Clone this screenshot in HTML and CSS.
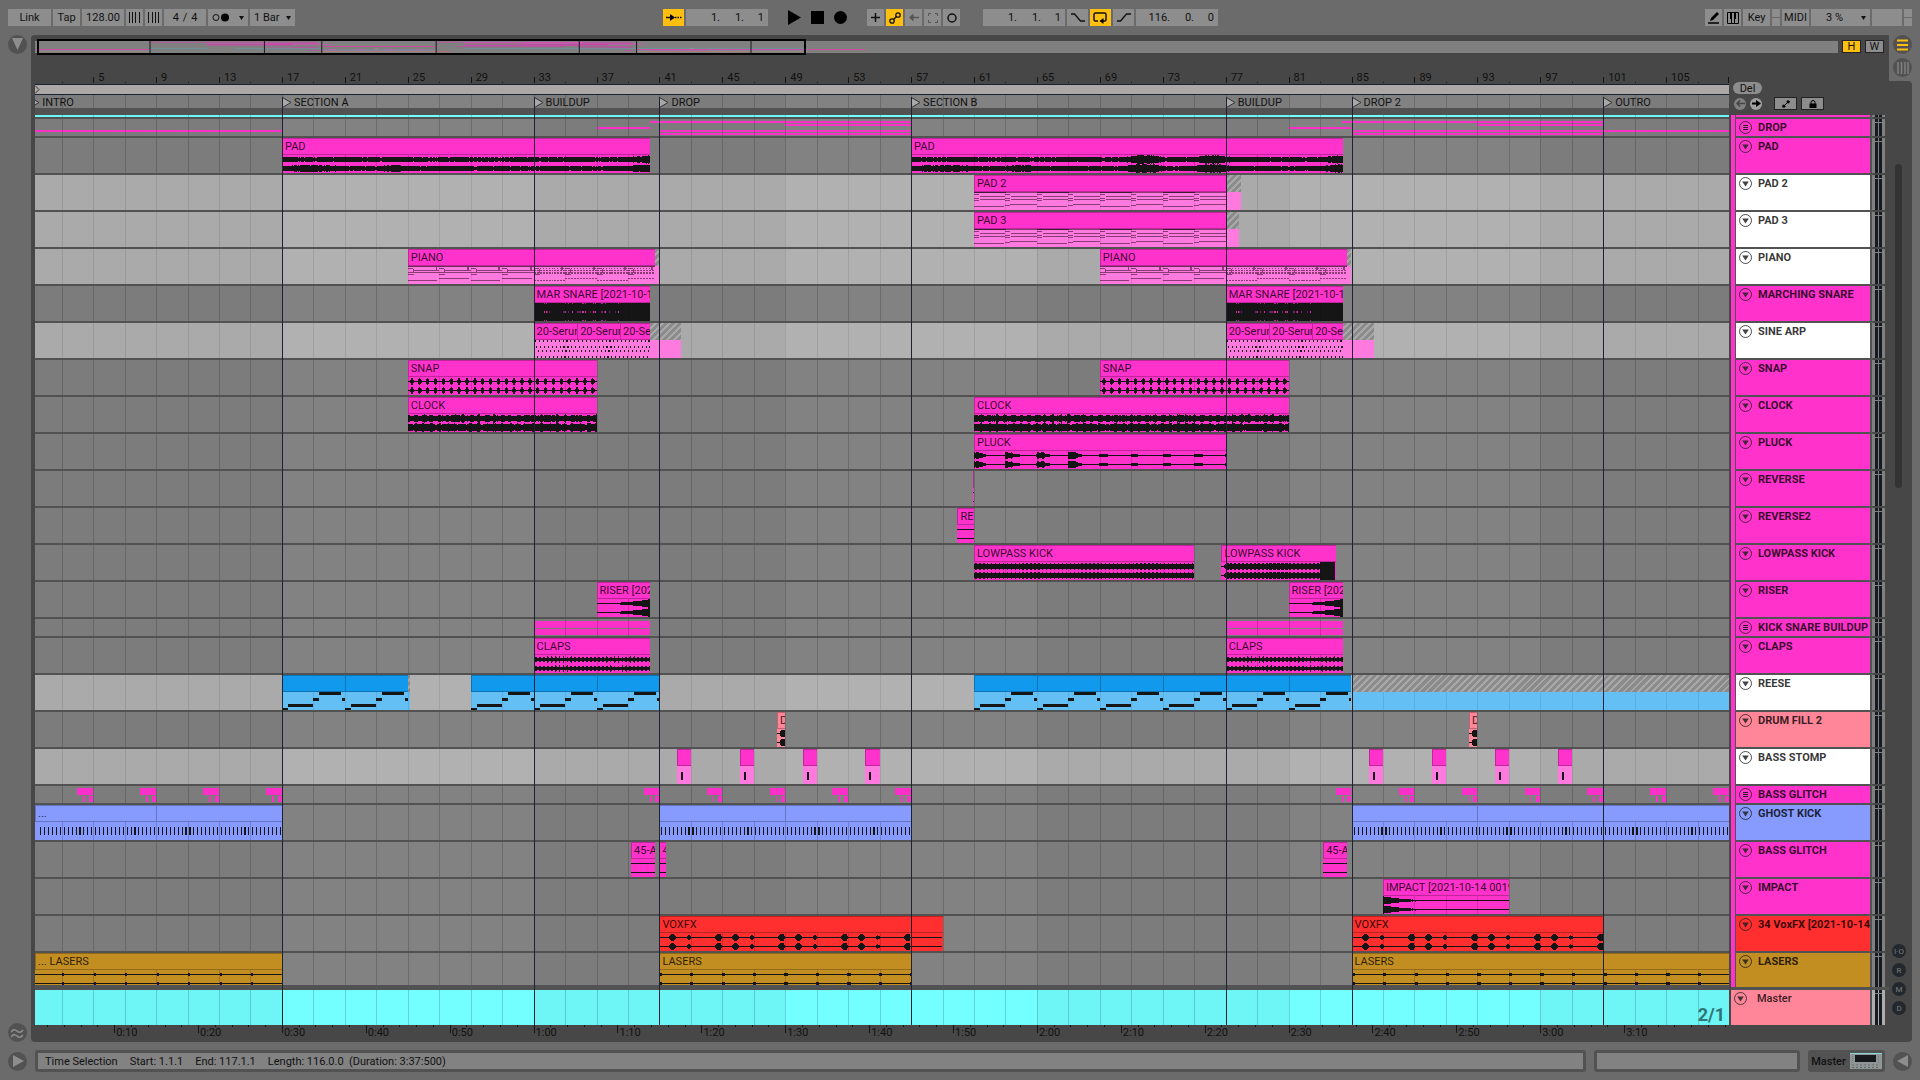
FILE: index.html
```html
<!DOCTYPE html>
<html lang="en">
<head>
    <meta charset="UTF-8">
    <meta name="viewport" content="width=device-width, initial-scale=1.0">
    <title>Arrangement</title>
    <link rel="stylesheet" href="styles.css">
</head>
<body>
    <header class="toolbar">
        <div class="tools">
            <button class="btn w-link">Link</button>
            <button class="btn w-key">Tap</button>
            <input class="field w-tempo" type="text" value="128.00" aria-label="Tempo">
            <button class="btn w-icon" aria-label="Nudge down">
                <svg width="13" height="11"><path d="M1.5 0v11M4.5 0v11M7.5 0v11M11.5 0v11" stroke="#111"/></svg>
            </button>
            <button class="btn w-icon" aria-label="Nudge up">
                <svg width="13" height="11"><path d="M1.5 0v11M5.5 0v11M8.5 0v11M11.5 0v11" stroke="#111"/></svg>
            </button>
            <div class="field signature w-tempo">
                <input type="text" value="4" aria-label="Beats"><span>/</span><input type="text" value="4" aria-label="Beat unit">
            </div>
            <button class="btn w-metro" aria-label="Metronome">
                <svg width="18" height="9"><circle cx="4" cy="4.5" r="3" fill="none" stroke="#111"/><circle cx="13" cy="4.5" r="4" fill="#000"/></svg>
                <svg width="5" height="4"><path d="M0 0h5l-2.5 4z" fill="#111"/></svg>
            </button>
            <span class="select w-bar">
                <select aria-label="Quantization"><option>1 Bar</option><option>None</option></select>
            </span>
        </div>

        <div class="tools">
            <button class="btn on w-wide" aria-label="Follow">
                <svg width="16" height="9"><path d="M0 4.5h5M9 4.5h1.500M11.500 4.500h1.500M14 4.500h1.500" stroke="#111" stroke-width="1.500"/><path d="M4 1l5 3.500-5 3.500z"/></svg>
            </button>
            <div class="field position">
                <input type="text" value="1." aria-label="Bar"><input type="text" value="1." aria-label="Beat"><input type="text" value="1" aria-label="Sixteenth">
            </div>
            <div class="transport">
                <button aria-label="Play"><svg width="13" height="15"><path d="M0 0l13 7.500-13 7.500z"/></svg></button>
                <button aria-label="Stop"><svg width="13" height="13"><path d="M0 0h13v13H0z"/></svg></button>
                <button aria-label="Record"><svg width="13" height="13"><circle cx="6.500" cy="6.500" r="6.500"/></svg></button>
            </div>
            <button class="btn w-icon" aria-label="Overdub"><svg width="9" height="9"><path d="M4.500 0v9M0 4.500h9" stroke="#111" stroke-width="1.500"/></svg></button>
            <button class="btn on w-icon" aria-label="Automation arm">
                <svg width="12" height="12" fill="none" stroke="#111" stroke-width="1.300"><circle cx="3" cy="9" r="2.200"/><circle cx="9" cy="3" r="2.200"/><path d="M4.500 7.500L7.500 4.500" stroke-width="1.500"/></svg>
            </button>
            <button class="btn w-icon" aria-label="Re-enable automation"><svg width="10" height="9"><path d="M3 4.500h7" stroke="#555" stroke-width="1.500"/><path d="M0 4.500l4.500-4v8z" fill="#555"/></svg></button>
            <button class="btn w-icon" aria-label="Capture"><svg width="10" height="10" fill="none" stroke="#555"><path d="M.5 3V.5H3M7 .5h2.500V3M9.500 7v2.500H7M3 9.500H.5V7"/></svg></button>
            <button class="btn w-icon" aria-label="Session record"><svg width="10" height="10"><circle cx="5" cy="5" r="4" fill="none" stroke="#111" stroke-width="1.500"/></svg></button>
            <div class="field position loop-start">
                <input type="text" value="1." aria-label="Loop bar"><input type="text" value="1." aria-label="Loop beat"><input type="text" value="1" aria-label="Loop sixteenth">
            </div>
            <button class="btn w-wide" aria-label="Punch in"><svg width="14" height="9"><path d="M0 1h3.500l6 7H14" fill="none" stroke="#111" stroke-width="1.300"/></svg></button>
            <button class="btn on w-wide" aria-label="Loop"><svg width="15" height="12"><path d="M5 9H2.500Q1 9 1 7.500v-5Q1 1 2.500 1h9Q13 1 13 2.500v5Q13 9 11.500 9H9" fill="none" stroke="#111" stroke-width="1.500"/><path d="M6.500 9l4-3v6z"/></svg></button>
            <button class="btn w-wide" aria-label="Punch out"><svg width="14" height="9"><path d="M0 8h3.500l6-7H14" fill="none" stroke="#111" stroke-width="1.300"/></svg></button>
            <div class="field position">
                <input type="text" value="116." aria-label="Length bars"><input type="text" value="0." aria-label="Length beats"><input type="text" value="0" aria-label="Length sixteenths">
            </div>
        </div>

        <div class="tools right">
            <button class="btn w-icon" aria-label="Draw mode"><svg width="12" height="12"><path d="M2 9l1-3 6-6 2 2-6 6z"/><path d="M0 11h11" stroke="#000" stroke-width="1.500"/></svg></button>
            <button class="btn w-icon" aria-label="Computer keyboard"><svg width="12" height="12"><path d="M.5.5h11v11H.5zM4.500 6v6M7.500 6v6" fill="none" stroke="#000"/><path d="M3 1h2v6H3zM7 1h2v6H7z"/></svg></button>
            <button class="btn w-key">Key</button>
            <span class="leds"><i></i><i></i></span>
            <button class="btn w-key">MIDI</button>
            <span class="select w-cpu">
                <select aria-label="CPU load"><option>3 %</option></select>
            </span>
            <span class="field w-disk"></span>
            <span class="leds"><i></i><i></i></span>
        </div>
    </header>

    <main class="workspace">
        <div class="gutter left">
            <button class="round" aria-label="Show browser"><svg width="11" height="13"><path d="M0 0h11l-5.500 12z" fill="#8d8d8d"/></svg></button>
            <button class="round" aria-label="Groove pool"><svg width="13" height="12" fill="none" stroke="#8d8d8d" stroke-width="1.500"><path d="M0 5q3-4 6-1t6-1M0 10q3-4 6-1t6-1"/></svg></button>
        </div>

        <section class="panel">
            <div class="overview-row">
                <div class="overview" id="overview"></div>
                <button class="btn boxed on">H</button>
                <button class="btn boxed">W</button>
            </div>
            <div class="arrangement">
                <div class="timeline">
                    <div class="ruler" id="ruler"></div>
                    <div class="sheet">
                        <div class="loop"><svg class="marker" width="5" height="9"><path d="M0 .5l4 4-4 4" fill="none" stroke="#333"/></svg></div>
                        <div class="locators" id="locators"></div>
                        <div class="lanes" id="lanes"></div>
                        <div class="section-lines" id="sectionLines"></div>
                    </div>
                    <div class="time-ruler" id="timeRuler"></div>
                </div>
                <div class="tracks">
                    <div class="track-tools">
                        <button class="pill">Del</button>
                        <div class="tool-line">
                            <button class="dot off" aria-label="Previous locator"><svg width="9" height="7"><path d="M1 3.500h8M4 .5l-3 3 3 3" fill="none" stroke="#444" stroke-width="1.500"/></svg></button>
                            <button class="dot" aria-label="Next locator"><svg width="9" height="7"><path d="M0 3.500h6" stroke="#000" stroke-width="2"/><path d="M4 0l5 3.500-5 3.500z"/></svg></button>
                            <button class="btn boxed tool" aria-label="Automation mode"><svg width="8" height="8"><path d="M1.500 6.500l5-5" stroke="#000"/><circle cx="1.800" cy="6.200" r="1.600"/><circle cx="6.200" cy="1.800" r="1.600"/></svg></button>
                            <button class="btn boxed tool" aria-label="Lock envelopes"><svg width="8" height="8"><path d="M.5 3.500h7V8h-7z"/><path d="M2 4V2.500a2 2 0 014 0V4" fill="none" stroke="#000"/></svg></button>
                        </div>
                    </div>
                    <div class="headers" id="headers"></div>
                </div>
            </div>
        </section>

        <div class="gutter side">
            <div class="views">
                <button class="round" aria-label="Arrangement view"><svg width="11" height="12"><path d="M0 1.500h11M0 6h11M0 10.500h11" stroke="#ffbf0f" stroke-width="2"/></svg></button>
                <button class="round" aria-label="Session view"><svg width="12" height="12"><path d="M1 0v12M4.500 0v12M8 0v12M11 0v12" stroke="#808080" stroke-width="1.500"/></svg></button>
            </div>
            <div class="scroll">
                <div class="thumb"></div>
                <div class="shows">
                    <button>I·O</button>
                    <button>R</button>
                    <button>M</button>
                    <button>D</button>
                </div>
            </div>
        </div>
    </main>

    <footer class="status">
        <button class="round" aria-label="Show info"><svg width="12" height="12"><path d="M1 0l11 6-11 6z" fill="#8d8d8d"/></svg></button>
        <div class="info">
            <span>Time Selection</span>
            <span>Start: 1.1.1</span>
            <span>End: 117.1.1</span>
            <span>Length: 116.0.0&nbsp; (Duration: 3:37:500)</span>
        </div>
        <div class="info message"></div>
        <button class="device">Master
            <svg width="32" height="16"><path d="M0 0h32v16H0z" fill="#8f9696"/><path d="M5 2h21v7H5z" fill="#15191c"/><path d="M0 .5h32" stroke="#8fd6d6"/><path d="M2 12h28M2 14.500h28" stroke="#666" stroke-dasharray="2 2"/><path d="M28.500 3v7M2.500 3v7" stroke="#777" stroke-dasharray="1 1"/></svg>
        </button>
        <button class="round" aria-label="Show clip view"><svg width="12" height="12"><path d="M11 0L0 6l11 6z" fill="#8d8d8d"/></svg></button>
    </footer>

    <script src="script.js"></script>
</body>
</html>
```
FILE: styles.css
```css
* {
    box-sizing: border-box;
}
body {
    margin: 0;
    height: 100vh;
    display: flex;
    flex-direction: column;
    overflow: hidden;
    background: #6b6b6b;
    color: #111;
    font-family: Roboto, "Liberation Sans", sans-serif;
    font-size: 11px;
    line-height: 13px;
}
button, input, select {
    font: inherit;
    color: inherit;
    margin: 0;
    padding: 0;
    border: 0;
    border-radius: 0;
    background: none;
}
button {
    display: flex;
    align-items: center;
    justify-content: center;
    cursor: pointer;
}
svg {
    display: block;
    flex: none;
}

/* toolbar */
.toolbar {
    display: grid;
    grid-template-columns: 655fr auto 694fr;
    padding: 9px 8px;
    flex: none;
}
.tools {
    display: flex;
    gap: 2px;
    height: 17px;
}
.tools.right {
    justify-content: flex-end;
}
.btn, .field, .select {
    background: #8d8d8d;
    height: 17px;
}
.on {
    background: #ffbf0f;
}
input.field {
    text-align: center;
}
.w-link { width: 43px; }
.w-key { width: 27px; }
.w-tempo { width: 42px; }
.w-icon { width: 17px; }
.w-wide { width: 21px; }
.w-metro { width: 40px; gap: 9px; }
.w-bar { width: 45px; }
.w-cpu { width: 59px; }
.w-disk { width: 30px; }
.signature {
    display: flex;
    align-items: center;
    justify-content: center;
}
.signature input {
    width: 14px;
    text-align: center;
}
.select {
    position: relative;
}
.select select {
    appearance: none;
    width: 100%;
    height: 100%;
    padding-left: 4px;
}
.w-cpu select {
    padding-left: 15px;
}
.select::after {
    content: "";
    position: absolute;
    right: 4px;
    top: 7px;
    width: 5px;
    height: 4px;
    background: #111;
    clip-path: polygon(0 0, 100% 0, 50% 100%);
    pointer-events: none;
}
.position {
    display: flex;
    width: 82px;
    padding-right: 4px;
}
.position input {
    width: 34px;
    text-align: right;
}
.position input + input {
    width: 24px;
}
.position input:last-child {
    width: 20px;
}
.loop-start {
    margin-left: 21px;
}
.transport {
    display: flex;
    gap: 10px;
    padding: 0 18px;
}
.leds {
    display: grid;
    gap: 1px;
    width: 8px;
}
.leds i {
    background: #8d8d8d;
}

/* workspace */
.workspace {
    flex: 1;
    display: flex;
    min-height: 0;
}
.gutter {
    flex: none;
    width: 31px;
    display: flex;
    flex-direction: column;
}
.left {
    justify-content: space-between;
    padding-left: 8px;
}
.round {
    flex: none;
    width: 19px;
    height: 19px;
    border-radius: 50%;
    background: #525252;
}
.views {
    display: flex;
    flex-direction: column;
    gap: 4px;
    height: 46px;
    padding-left: 4px;
}
.scroll {
    flex: 1;
    display: flex;
    flex-direction: column;
    justify-content: space-between;
    width: 23px;
    padding: 83px 0 27px 6px;
    background: #474747;
    border-radius: 0 4px 4px 0;
}
.thumb {
    width: 7px;
    height: 324px;
    border-radius: 4px;
    background: #333;
}
.shows {
    display: grid;
    gap: 5px;
    margin-left: -3px;
}
.shows button {
    width: 14px;
    height: 14px;
    border-radius: 50%;
    background: #22282e;
    color: #7d7d7d;
    font-size: 8px;
}
.panel {
    flex: 1;
    min-width: 0;
    display: flex;
    flex-direction: column;
    background: #474747;
    border-radius: 4px 0 0 4px;
    padding-left: 4px;
}
.overview-row {
    display: flex;
    align-items: center;
    gap: 4px;
    height: 23px;
    padding-right: 5px;
}
.overview {
    position: relative;
    flex: 1;
    height: 12px;
    background: #808080;
}
.overview svg {
    width: 100%;
    height: 100%;
}
.frame {
    position: absolute;
    top: -2px;
    bottom: -2px;
    border: 2px solid #000;
}
.boxed {
    width: 19px;
    height: 13px;
    border: 1px solid #222;
}
.arrangement {
    flex: 1;
    display: flex;
    gap: 2px;
}
.timeline {
    flex: 1;
    min-width: 0;
    display: flex;
    flex-direction: column;
    overflow: hidden;
}
.ruler {
    position: relative;
    height: 26px;
    overflow: hidden;
}
.tick {
    position: absolute;
    width: 1px;
    background: #151515;
}
.ruler .tick {
    bottom: 1px;
    height: 6px;
}
.ruler .minor {
    height: 1px;
}
.ruler-label {
    position: absolute;
    padding-left: 5px;
    bottom: 0;
}
.sheet {
    position: relative;
    background: #525252;
}
.loop {
    height: 11px;
    background: #aca8a8;
    border: solid #1d2230;
    border-width: 1px 0;
}
.locators {
    position: relative;
    height: 13px;
    margin-bottom: 7px;
    background: #828282;
    overflow: hidden;
}
.locator {
    position: absolute;
    display: flex;
    align-items: center;
    gap: 2px;
    height: 13px;
    padding-top: 2px;
    white-space: nowrap;
}
.lanes {
    position: relative;
    display: grid;
    gap: 2px;
}
.lane {
    position: relative;
    height: 35px;
    background: #828282;
    overflow: hidden;
}
.lane.light { background: #b1b1b1; }
.lane.group { height: 17px; }
.lane.strip, .header.strip { height: 2px; }
.lane.strip, .lane.master { background: #73ffff; }
.lane.last {
    height: 32px;
    margin-bottom: 3px;
}
.shade {
    position: absolute;
    top: 0;
    bottom: 0;
    background: rgba(0, 0, 0, 0.04);
}
.grid-line {
    position: absolute;
    top: 0;
    bottom: 0;
    z-index: 2;
    width: 1px;
    background: rgba(0, 0, 0, 0.17);
}
.light .grid-line {
    background: rgba(0, 0, 0, 0.09);
}
.section-lines i {
    position: absolute;
    top: 13px;
    bottom: 0;
    z-index: 4;
    width: 1px;
    background: #1d2230;
}
.big-label {
    position: absolute;
    right: 4px;
    bottom: 0;
    z-index: 3;
    color: #2f7474;
    font-size: 18px;
    font-weight: 700;
    line-height: 20px;
}

/* clips */
.clip {
    position: absolute;
    top: 0;
    bottom: 0;
    overflow: hidden;
    background: #ff33cc;
}
.clip-name {
    position: relative;
    z-index: 3;
    height: 17px;
    padding: 1px 0 0 2px;
    border: solid rgba(0, 0, 0, 0.25);
    border-width: 1px 0 1px 1px;
    background: #ff33cc;
    color: rgba(0, 0, 0, 0.8);
    line-height: 14px;
    white-space: nowrap;
    overflow: hidden;
}
.clip svg {
    width: 100%;
    height: 18px;
    shape-rendering: crispEdges;
}
.clip.midi { background: #ff7ade; }
.clip.blue { background: #64c0f4; }
.clip.blue .clip-name { background: #1199ee; }
.clip.peri, .clip.peri .clip-name { background: #879bff; }
.clip.salmon, .clip.salmon .clip-name { background: #ff8699; }
.clip.red, .clip.red .clip-name { background: #ff2f2f; }
.clip.gold, .clip.gold .clip-name { background: #c28d21; }
.clip.tail .clip-name {
    border: 0;
    background: repeating-linear-gradient(135deg, #8b8b8b 0 3px, #a8a8a8 3px 5px);
}
.block {
    position: absolute;
    background: #fa30c8;
}

/* track headers */
.tracks {
    flex: none;
    width: 158px;
}
.track-tools {
    height: 57px;
    padding: 24px 0 0 2px;
}
.pill {
    width: 29px;
    height: 12px;
    border-radius: 6px;
    background: #8d8d8d;
}
.tool-line {
    display: flex;
    align-items: center;
    gap: 4px;
    padding: 3px 0 0 1px;
}
.dot {
    width: 12px;
    height: 12px;
    border-radius: 50%;
    background: #a0a0a0;
}
.dot.off { background: #808080; }
.tool {
    width: 23px;
}
.dot + .tool {
    margin-left: 8px;
}
.headers {
    display: grid;
    gap: 2px;
    background: linear-gradient(90deg, #ff33cc 4px, #525252 4px 142px, transparent 142px);
}
.header {
    display: grid;
    grid-template-columns: 134px 13px;
    gap: 2px;
    height: 35px;
    padding-left: 5px;
}
.header.group { height: 17px; }
.header.last { height: 34px; }
.header.master {
    grid-template-columns: 139px 13px;
    margin-top: 1px;
    padding-left: 0;
    box-shadow: 0 -3px #525252;
}
.title {
    display: flex;
    align-items: flex-start;
    gap: 6px;
    padding: 2px 0 0 3px;
    background: #ff33cc;
    color: rgba(0, 0, 0, 0.8);
    font-weight: 700;
    white-space: nowrap;
    overflow: hidden;
}
.strip .title { padding: 0; }
.light .title { background: #fff; }
.peri .title { background: #879bff; }
.salmon .title { background: #ff8699; }
.red .title { background: #ff2f2f; }
.gold .title { background: #c28d21; }
.master .title {
    gap: 10px;
    padding-left: 3px;
    font-weight: 500;
}
.meter {
    position: relative;
    background: linear-gradient(90deg, #808080 3px, #151b20 3px 6px, #808080 6px 7px, #151b20 7px 10px, #808080 10px);
}
.meter::after {
    content: "";
    position: absolute;
    top: 3px;
    left: 3px;
    width: 7px;
    height: 1px;
    background: #808080;
}
.strip .meter::after { display: none; }
.master .meter {
    background: linear-gradient(90deg, #adadad 3px, #151b20 3px 6px, #adadad 6px 7px, #151b20 7px 10px, #adadad 10px);
}

/* time ruler */
.time-ruler {
    position: relative;
    height: 17px;
    overflow: hidden;
}
.time-ruler .tick {
    top: 0;
    height: 8px;
}
.time-ruler .minor {
    height: 2px;
}
.time-label {
    position: absolute;
    top: 1px;
    padding-left: 2px;
}

/* status bar */
.status {
    flex: none;
    display: flex;
    align-items: center;
    gap: 8px;
    height: 38px;
    padding: 0 8px;
}
.info {
    flex: 1;
    display: flex;
    align-items: center;
    gap: 12px;
    height: 22px;
    padding: 0 7px;
    border: 3px solid #525252;
    border-radius: 3px;
    background: #828282;
}
.message {
    flex: none;
    width: 206px;
}
.device {
    gap: 4px;
    width: 77px;
    height: 22px;
    border-radius: 3px;
    background: #525252;
    font-weight: 500;
}
```
FILE: script.js
```js
const VIEW_START = 1.3;
const VIEW_END = 109;
const SECONDS_PER_BAR = 1.875; // 128 BPM in 4/4

const locators = [
    [1, "INTRO"], [17, "SECTION A"], [33, "BUILDUP"], [41, "DROP"], [57, "SECTION B"],
    [77, "BUILDUP"], [85, "DROP 2"], [101, "OUTRO"]
];

// clip: [start, end, name, drawing]
const tracks = [
    { type: "strip" },
    { name: "DROP", type: "group", blocks: [
        [1, 17, 11, 2], [37, 40.4, 8, 2], [40.4, 57, 2, 2], [49, 57, 5, 2], [41, 57, 11, 2], [41, 57, 14, 2],
        [81, 85, 8, 2], [84.4, 101, 2, 2], [93, 101, 5, 2], [85, 109, 11, 2], [85, 101, 14, 2]
    ] },
    { name: "PAD", clips: [[17, 40.43, "PAD", "pad"], [57, 84.43, "PAD", "pad"]] },
    { name: "PAD 2", type: "light", color: "midi", clips: [[61, 77, "PAD 2", "chords"], [77, 78, "", "tail"]] },
    { name: "PAD 3", type: "light", color: "midi", clips: [[61, 77, "PAD 3", "chords"], [77, 77.87, "", "tail"]] },
    { name: "PIANO", type: "light", color: "midi", clips: [
        [25, 40.7, "PIANO", "piano"], [40.7, 41, "", "tail"], [69, 84.7, "PIANO", "piano"], [84.7, 85, "", "tail"]
    ] },
    { name: "MARCHING SNARE", clips: [
        [33, 40.43, "MAR SNARE [2021-10-14 0019", "snare"], [77, 84.43, "MAR SNARE [2021-10-14 0019", "snare"]
    ] },
    { name: "SINE ARP", type: "light", color: "midi", clips: [
        [33, 35.77, "20-Serum", "arp"], [35.77, 38.5, "20-Serum", "arp"], [38.5, 40.43, "20-Serum", "arp"], [40.43, 42.4, "", "tail"],
        [77, 79.77, "20-Serum", "arp"], [79.77, 82.5, "20-Serum", "arp"], [82.5, 84.43, "20-Serum", "arp"], [84.43, 86.4, "", "tail"]
    ] },
    { name: "SNAP", clips: [[25, 37, "SNAP", "snap"], [69, 81, "SNAP", "snap"]] },
    { name: "CLOCK", clips: [[25, 37, "CLOCK", "clock"], [61, 81, "CLOCK", "clock"]] },
    { name: "PLUCK", clips: [[61, 77, "PLUCK", "pluck"]] },
    { name: "REVERSE", clips: [[60.92, 61, "", "flat"]] },
    { name: "REVERSE2", clips: [[59.95, 61, "REVERSE", "flat"]] },
    { name: "LOWPASS KICK", clips: [[61, 75, "LOWPASS KICK", "kick"], [76.73, 84, "LOWPASS KICK", "kick"]] },
    { name: "RISER", clips: [[37, 40.43, "RISER [2021-10-14", "riser"], [81, 84.43, "RISER [2021-10-14", "riser"]] },
    { name: "KICK SNARE BUILDUP", type: "group", blocks: [
        [33, 40.43, 2, 7], [33, 40.43, 10, 6], [77, 84.43, 2, 7], [77, 84.43, 10, 6]
    ] },
    { name: "CLAPS", clips: [[33, 40.43, "CLAPS", "claps"], [77, 84.43, "CLAPS", "claps"]] },
    { name: "REESE", type: "light", color: "blue", clips: [
        [17, 21, "", "bass"], [21, 25, "", "bass"], [25, 25.15, "", "tail"],
        [29, 33, "", "bass"], [33, 37, "", "bass"], [37, 41, "", "bass"],
        [61, 65, "", "bass"], [65, 69, "", "bass"], [69, 73, "", "bass"], [73, 77, "", "bass"],
        [77, 81, "", "bass"], [81, 85, "", "bass"], [85, 109, "", "tail"]
    ] },
    { name: "DRUM FILL 2", color: "salmon", header: "salmon", clips: [[48.47, 49, "DRUM FILL", "fill"], [92.47, 93, "DRUM FILL", "fill"]] },
    { name: "BASS STOMP", type: "light", color: "midi", clips: [42.1, 46.1, 50.1, 54.1, 86.1, 90.1, 94.1, 98.1].map(b => [b, b + 0.9, "", "stomp"]) },
    { name: "BASS GLITCH", type: "group", blocks: glitchBlocks() },
    { name: "GHOST KICK", color: "peri", header: "peri", clips: [
        [1.3, 9, "...", "ghost"], [9, 17, "", "ghost"], [41, 49, "", "ghost"], [49, 57, "", "ghost"],
        [85, 93, "", "ghost"], [93, 101, "", "ghost"], [101, 109, "", "ghost"]
    ] },
    { name: "BASS GLITCH", clips: [[39.2, 40.7, "45-Audio", "flat"], [41, 41.45, "45-Audio", "flat"], [83.2, 84.7, "45-Audio", "flat"]] },
    { name: "IMPACT", clips: [[87, 95, "IMPACT [2021-10-14 001953]", "impact"]] },
    { name: "34 VoxFX [2021-10-14", color: "red", header: "red", clips: [[41, 59, "VOXFX", "vox"], [85, 101, "VOXFX", "vox"]] },
    { name: "LASERS", type: "last", color: "gold", header: "gold", clips: [
        [1.3, 17, "... LASERS", "lasers"], [41, 57, "LASERS", "lasers"], [85, 109, "LASERS", "lasers"]
    ] },
    { name: "Master", type: "master", header: "salmon" }
];

function glitchBlocks() {
    const blocks = [];
    [5, 9, 13, 17, 41, 45, 49, 53, 57, 85, 89, 93, 97, 101, 105, 109].forEach(end => {
        blocks.push([end - 1, end, 2, 7], [end - 0.62, end - 0.5, 10, 6], [end - 0.27, end, 10, 6]);
    });
    return blocks;
}

function left(bar) {
    return (bar - VIEW_START) / (VIEW_END - VIEW_START) * 100;
}

function width(start, end) {
    return (end - start) / (VIEW_END - VIEW_START) * 100;
}

function noise(n) {
    const v = Math.sin(n * 12.9898) * 43758.5453;
    return v - Math.floor(v);
}

// distance from the nearest multiple of the period
function near(t, period) {
    const m = ((t % period) + period) % period;
    return Math.min(m, period - m);
}

// swell that rises and falls between two bars
function swell(t, from, to) {
    return t < from || t > to ? 0 : Math.sin((t - from) / (to - from) * Math.PI);
}

// half height of the waveform, in pixels, at a bar
const waves = {
    pad: (t, s, e, ch) => 1.8 + noise(t * 7 + ch) * 1.1 + 1.8 * (swell(t, 70.5, 73.2) + swell(t, 75, 77.4))
        + Math.max(0, t - e + 1.6) + (ch ? swell(t, s, s + 4) + swell(t, s + 6, s + 8) : 0),
    snap: t => {
        const d = near(t - 0.25, 0.5);
        return d < 0.04 ? 3.7 : d < 0.1 ? 2.7 : 0.5;
    },
    clock: (t, s, e, ch) => 2.2 + ch * 0.5 + noise(t * 9 + ch) * 1.3 + (near(t, 0.5) < 0.12 ? 0.9 : 0),
    pluck: (t, s) => {
        const m = (t - s) % 2;
        const size = t - s < 8 ? 3.6 : 1.4;
        return Math.max(0.5, size * Math.exp(-Math.max(0, m - 0.4) * 2.6) * (0.7 + noise(t * 5) * 0.4));
    },
    flat: () => 0.5,
    kick: (t, s) => s > 76 && t < 76.95 ? 0.5 : t > 83 ? 4.2 : near(t, 0.25) < 0.07 ? 2.6 : 3.9,
    riser: (t, s, e) => 0.5 + 4 * Math.pow((t - s) / (e - s), 2.5),
    claps: (t, s, e, ch) => near(t, 0.25) < 0.07 ? 1.9 : 2.5 + noise(t * 3 + ch) * 1.2,
    fill: (t, s) => t - s < 0.2 ? 0.5 : 3.4,
    impact: (t, s) => Math.max(0.5, 4.4 * Math.exp(-(t - s) / 1.5) - noise(t) * 0.4),
    vox: t => {
        if (t > 57.2 && t < 60) return 0.5;
        const m = (t - 1) % 4;
        const blobs = [[0.87, 3.2], [1.9, 2], [3.83, 3.7]];
        let a = 0.5;
        blobs.forEach(([c, r]) => {
            const d = (m - c) * 16;
            if (Math.abs(d) < r) a = Math.max(a, Math.sqrt(r * r - d * d) + 0.3);
        });
        return a;
    },
    lasers: t => 0.5 + 0.8 * Math.max(0, 1 - ((t - 1) % 2) * 2)
};

function wavePath(kind, start, end) {
    const f = waves[kind];
    const count = Math.max(1, Math.round((end - start) * 16));
    let d = "";
    [4.5, 13.5].forEach((center, ch) => {
        let top = "";
        let bottom = "";
        for (let i = 0; i <= count; i++) {
            const a = f(start + i / 16, start, end, ch);
            top += `${i ? "L" : "M"}${i} ${(center - a).toFixed(1)}`;
            bottom = `L${i} ${(center + a).toFixed(1)}` + bottom;
        }
        d += top + bottom + "z";
    });
    return `<path d="${d}" fill="#151515"/>`;
}

function rect(x, y, w, h, fill) {
    return `<rect x="${x.toFixed(1)}" y="${y}" width="${w.toFixed(1)}" height="${h}" fill="${fill || "#151515"}"/>`;
}

// note drawings of the MIDI clips, 16 units per bar
const notes = {
    bass: () => rect(0, 16, 6, 2) + rect(6, 12, 26, 3) + rect(32, 6, 6, 3) + rect(38, 0, 22, 3) + rect(61, 6, 3, 3),
    ghost: (s, e) => {
        let out = "";
        for (let t = Math.ceil(s * 4) / 4; t < e; t += 0.25) out += rect((t - s) * 16 + 2, 5, 1.1, 8);
        return out;
    },
    stomp: () => rect(4.5, 6, 1.5, 8),
    arp: (s, e) => {
        let out = "";
        for (let x = 0; x < (e - s) * 16; x += 4) {
            out += rect(x + 1, 0, 1.1, 2) + rect(x + 2, 6, 1.1, 2) + rect(x, 10, 1.1, 2) + rect(x + 3, 16, 1.1, 2);
        }
        return out;
    },
    chords: (s, e) => {
        const c = "#8a3c77";
        let out = "";
        for (let t = s; t < e; t += 4) {
            const x = (t - s) * 16;
            out += rect(x, 0, 33, 1, "#3d1a35") + rect(x + 33, 0, 31, 1, c);
            [0, 32].forEach(o => {
                out += rect(x + o, 2, 5, 1, c) + rect(x + o, 6, 5, 1, c) + rect(x + o, 8, 5, 1, c);
                out += rect(x + o + 6, 4, 26, 1, c) + rect(x + o + 6, 7, 26, 1, c);
            });
            out += rect(x, 14, 31, 1, c) + rect(x + 37, 12, 27, 1, c) + rect(x + 32, 13, 5, 1, c);
        }
        return out;
    },
    piano: (s, e) => {
        const c = "#8a3c77";
        let out = "";
        for (let t = s; t < e; t += 2) {
            const x = (t - s) * 16;
            const w = Math.min(32, (e - t) * 16);
            const odd = (t - s) % 4;
            out += rect(x, 0, w, 1, "#6b2d5c");
            out += rect(x, 2, 5, 1, c) + rect(x, 8, 6, 1, c) + rect(x + 5, 3, 1, 4, c) + rect(x + w - 4, 1, 2, 3, c);
            if (t - s < 8) {
                out += rect(x + 6, 4, w - 6, 1, c) + rect(x, 6, w, 1, c) + rect(x, odd ? 12 : 14, w - 2, 1, c);
            } else {
                for (let n = 0; n < w - 1; n += 3) {
                    out += rect(x + n, 2, 1, 1, c) + rect(x + n, 4, 2, 1, c) + rect(x + n, 6, 2, 2, c) + rect(x + n, odd ? 12 : 14, 2, 1, c);
                }
            }
        }
        return out;
    },
    snare: (s, e) => {
        let out = rect(0, 0, (e - s) * 16, 18);
        for (let x = 1; x < 92; x++) {
            const n = noise(x * 3);
            if (n > 0.72) {
                out += rect(x, 8, 1, 2, n > 0.9 ? "#d22fab" : "#70205e");
                if (n > 0.86) out += rect(x, 0, 1, 1, "#b02a90") + rect(x, 17, 1, 1, "#b02a90");
            }
        }
        return out;
    }
};

function clipHtml(clip, color) {
    const [start, end, name, kind] = clip;
    const inner = waves[kind] ? wavePath(kind, start, end) : notes[kind] ? notes[kind](start, end) : "";
    return `<div class="clip ${color || ""} ${kind === "tail" ? "tail" : ""}" style="left:${left(start)}%;width:${width(start, end)}%">
        <div class="clip-name">${name}</div>
        <svg viewBox="0 0 ${(end - start) * 16} 18" preserveAspectRatio="none">${inner}</svg>
    </div>`;
}

function gridLines() {
    let out = "";
    for (let bar = 3; bar < VIEW_END; bar += 2) out += `<i class="grid-line" style="left:${left(bar)}%"></i>`;
    return out;
}

function shades() {
    let out = "";
    for (let bar = 1; bar < VIEW_END; bar += 32) out += `<i class="shade" style="left:${left(bar)}%;width:${width(bar, bar + 16)}%"></i>`;
    return out;
}

function laneHtml(track) {
    const blocks = (track.blocks || []).map(([s, e, y, h]) =>
        `<i class="block" style="left:${left(s)}%;width:${width(s, e)}%;top:${y}px;height:${h}px"></i>`).join("");
    const clips = (track.clips || []).map(clip => clipHtml(clip, track.color)).join("");
    const label = track.type === "master" ? '<span class="big-label">2/1</span>' : "";
    return `<div class="lane ${track.type || ""}">${shades()}${blocks}${clips}${gridLines()}${label}</div>`;
}

function headerHtml(track) {
    if (track.type === "strip") return '<div class="header strip"><div class="title"></div><div class="meter"></div></div>';
    const mark = track.type === "group" ? '<path d="M4 4.500h5M4 6.500h5M4 8.500h5" stroke="#222"/>' : '<path d="M3.200 4.500h6.600l-3.300 5z" fill="#222" opacity=".85"/>';
    return `<div class="header ${track.type || ""} ${track.header || ""}">
        <div class="title">
            <button aria-label="Fold ${track.name}"><svg width="13" height="13"><circle cx="6.500" cy="6.500" r="6" fill="none" stroke="#222" stroke-opacity=".8"/>${mark}</svg></button>
            <span>${track.name}</span>
        </div>
        <div class="meter"></div>
    </div>`;
}

function rulerHtml() {
    let out = "";
    for (let bar = 3; bar <= 109; bar += 2) {
        const major = bar % 4 === 1;
        out += `<i class="tick ${major ? "" : "minor"}" style="left:${left(Math.min(bar, 108.93))}%"></i>`;
        if (major && bar < 109) out += `<span class="ruler-label" style="left:${left(bar)}%">${bar}</span>`;
    }
    return out;
}

function timeRulerHtml() {
    let out = "";
    for (let sec = 2; sec < 203; sec += 2) {
        const x = left(1 + sec / SECONDS_PER_BAR);
        const major = sec % 10 === 0;
        out += `<i class="tick ${major && sec < 200 ? "" : "minor"}" style="left:${x}%"></i>`;
        if (major && sec < 200) {
            const label = Math.floor(sec / 60) + ":" + String(sec % 60).padStart(2, "0");
            out += `<span class="time-label" style="left:${x}%">${label}</span>`;
        }
    }
    return out;
}

// the overview is 252 bars wide
function overviewHtml() {
    const colors = { midi: "#d850b8", blue: "#5f9fa8", peri: "#9088c8", red: "#d86070", gold: "#a09070", salmon: "#d88090" };
    let out = "";
    tracks.forEach((track, i) => {
        const y = i * 0.42;
        (track.clips || []).forEach(([s, e]) => {
            out += `<rect x="${s - 1}" y="${y}" width="${e - s}" height="0.6" fill="${colors[track.color] || "#d040b0"}"/>`;
        });
    });
    [[0, 16, 8], [40, 56, 5], [84, 116, 8]].forEach(([s, e, y]) => {
        out += `<rect x="${s}" y="${y}" width="${e - s}" height="1" fill="#c8509c"/>`;
    });
    locators.slice(1).forEach(([bar]) => {
        out += `<rect x="${bar - 1}" y="0" width="0.15" height="12" fill="#222"/>`;
    });
    return `<svg viewBox="0 0 252 12" preserveAspectRatio="none">${out}</svg>
        <div class="frame" style="left:${0.27 / 252 * 100}%;width:${107.5 / 252 * 100}%"></div>`;
}

document.getElementById("overview").innerHTML = overviewHtml();
document.getElementById("ruler").innerHTML = rulerHtml();
document.getElementById("timeRuler").innerHTML = timeRulerHtml();
document.getElementById("locators").innerHTML = shades() + gridLines() + locators.map(([bar, name]) =>
    `<div class="locator" style="left:${left(bar)}%"><svg width="10" height="11"><path d="M.5 .5l8.500 5-8.500 5z" fill="#a8a8a8" stroke="#333"/></svg><span>${name}</span></div>`).join("");
document.getElementById("lanes").innerHTML = tracks.map(laneHtml).join("");
document.getElementById("sectionLines").innerHTML = locators.slice(1).map(([bar]) => `<i style="left:${left(bar)}%"></i>`).join("");
document.getElementById("headers").innerHTML = tracks.map(headerHtml).join("");
```
